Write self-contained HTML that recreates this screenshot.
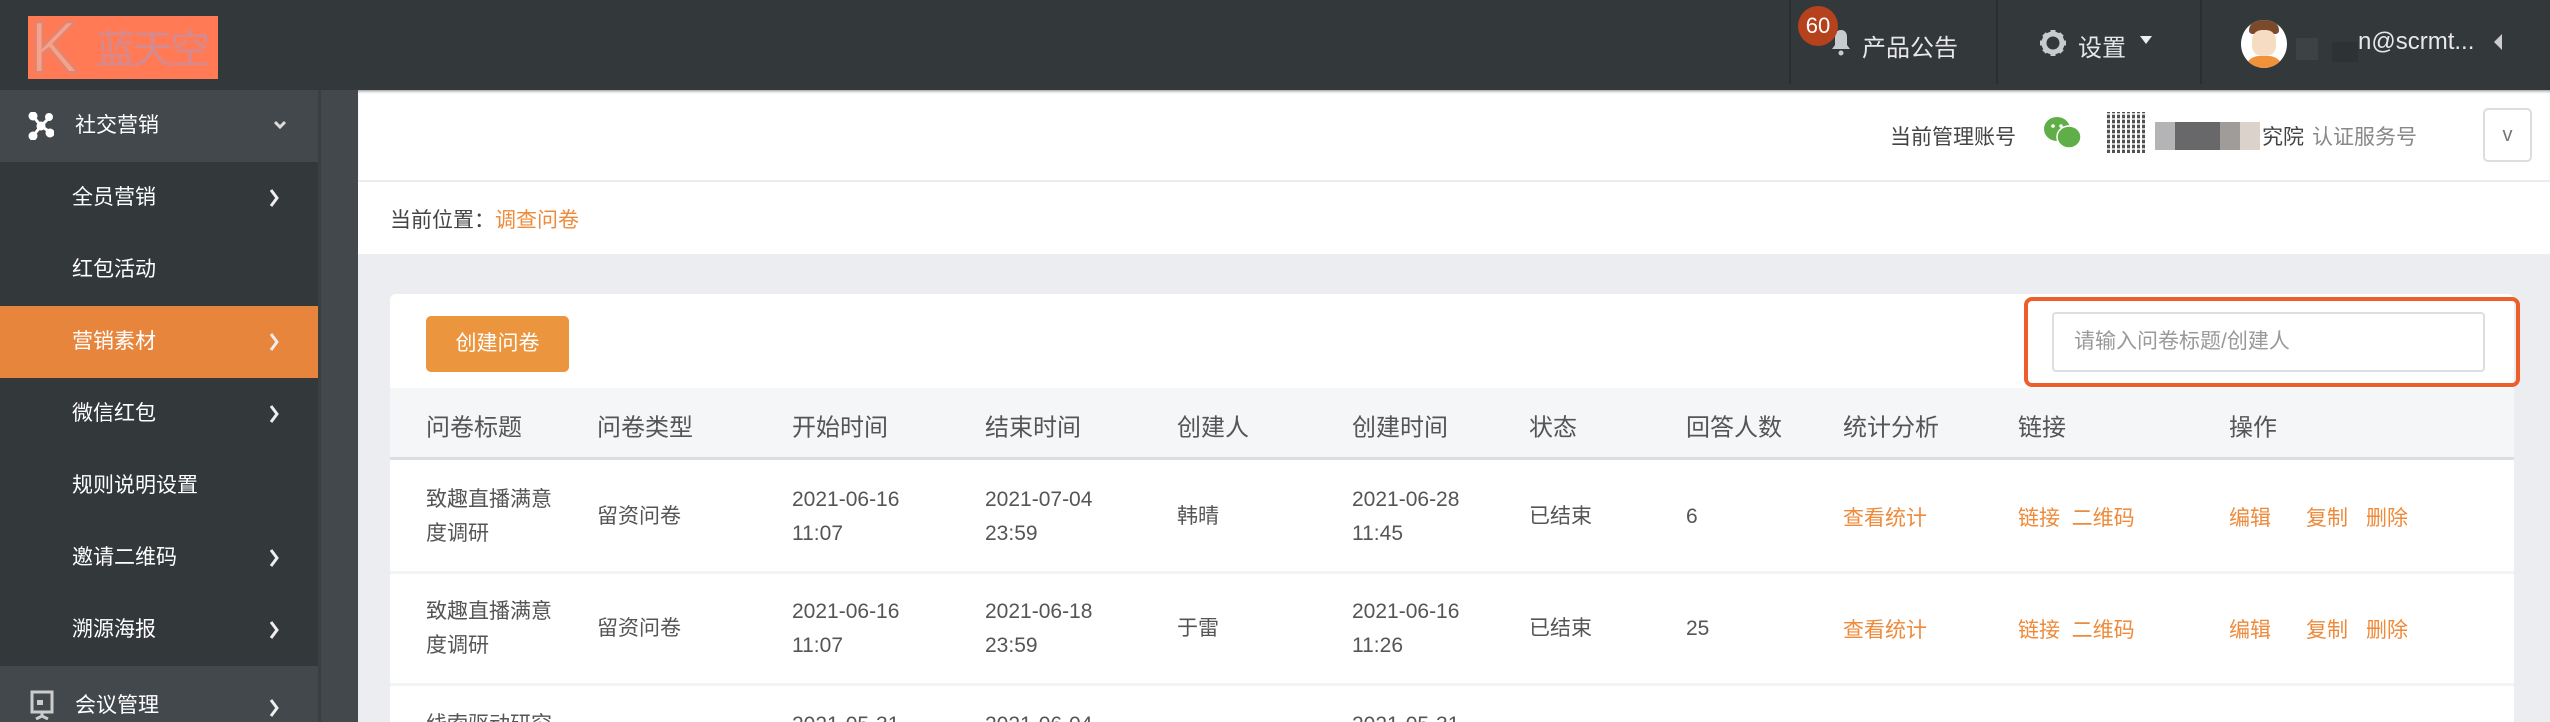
<!DOCTYPE html>
<html><head><meta charset="utf-8"><style>
*{margin:0;padding:0;box-sizing:border-box}
html{width:2550px;height:722px;overflow:hidden}
body{width:2550px;height:722px;overflow:hidden;background:#ebedf0;font-family:"Liberation Sans","Noto Sans CJK SC",sans-serif;position:relative;color:#555}
.a{position:absolute;white-space:nowrap}
#top{left:0;top:0;width:2550px;height:90px;background:#33383b}
#side{left:0;top:90px;width:318px;height:632px;background:#33383b}
#strip{left:318px;top:90px;width:40px;height:632px;background:#43484c;border-left:3px solid #3a3f42}
.it{position:absolute;left:0;width:318px;height:72px;color:#fff;font-size:21px;line-height:72px;padding-left:72px}
.it .ch{position:absolute;left:268px;top:24px;width:12px;height:24px}
.th{font-size:24px;color:#555;top:425px;transform:translateY(-50%)}
.td{font-size:21px;color:#555;line-height:34px}
.or{color:#ee8a3a}
</style></head><body>
<div id="top" class="a"></div>
<div class="a" style="left:28px;top:16px;width:190px;height:63px;background:#ff7a55;overflow:hidden">
<div class="a" style="left:2px;top:-6px;font-size:72px;line-height:76px;color:#f8a08a;-webkit-text-stroke:2px #d98878">K</div>
<div class="a" style="left:68px;top:12px;font-size:40px;line-height:44px;color:#d58a90;letter-spacing:-3px">蓝天空</div>
</div>

<!-- top right -->
<div class="a" style="left:1789px;top:0;width:2px;height:84px;background:#2a2e30"></div>
<div class="a" style="left:1996px;top:0;width:2px;height:84px;background:#2a2e30"></div>
<div class="a" style="left:2200px;top:0;width:2px;height:84px;background:#2a2e30"></div>
<svg class="a" style="left:1830px;top:28px" width="22" height="28" viewBox="0 0 22 28"><path d="M11 2c-4 0-6 3-6 7v8l-3 4h18l-3-4V9c0-4-2-7-6-7z" fill="#c8ccce"/><circle cx="11" cy="25" r="2.5" fill="#c8ccce"/></svg>
<div class="a" style="left:1798px;top:6px;width:40px;height:40px;border-radius:50%;background:#b5421c;color:#fff;font-size:22px;line-height:40px;text-align:center">60</div>
<div class="a" style="left:1862px;top:28px;font-size:24px;color:#e8e8e8">产品公告</div>
<svg class="a" style="left:2040px;top:30px" width="26" height="26" viewBox="0 0 26 26"><circle cx="13" cy="13" r="9" fill="none" stroke="#c8ccce" stroke-width="5"/><g stroke="#c8ccce" stroke-width="5"><path d="M13 0v6M13 20v6M0 13h6M20 13h6M4 4l4 4M18 18l4 4M22 4l-4 4M4 22l4-4"/></g></svg>
<div class="a" style="left:2078px;top:28px;font-size:24px;color:#e8e8e8">设置</div>
<div class="a" style="left:2140px;top:36px;width:0;height:0;border-left:6px solid transparent;border-right:6px solid transparent;border-top:8px solid #eee"></div>
<div class="a" style="left:2241px;top:20px;width:46px;height:48px;border-radius:50%;background:#fff;overflow:hidden">
<div class="a" style="left:8px;top:0;width:30px;height:14px;background:#7b4a2b;border-radius:12px 12px 4px 4px"></div>
<div class="a" style="left:11px;top:10px;width:24px;height:26px;background:#f6dcc3;border-radius:10px"></div>
<div class="a" style="left:4px;top:36px;width:38px;height:16px;background:#f0923a;border-radius:14px 14px 0 0"></div></div>
<div class="a" style="left:2296px;top:38px;width:22px;height:22px;background:#3d4245"></div>
<div class="a" style="left:2332px;top:42px;width:26px;height:20px;background:#2d3235"></div>
<div class="a" style="left:2358px;top:28px;font-size:24px;color:#e8e8e8">n@scrmt...</div>
<div class="a" style="left:2494px;top:34px;width:0;height:0;border-top:8px solid transparent;border-bottom:8px solid transparent;border-right:8px solid #ccc"></div>

<!-- sidebar -->
<div id="side" class="a"></div>
<div id="strip" class="a"></div>
<div class="it" style="top:90px;background:#43484c;padding-left:75px">社交营销<svg class="a" style="left:273px;top:30px" width="14" height="10" viewBox="0 0 14 10"><path d="M2 2l5 5 5-5" stroke="#ddd" stroke-width="3" fill="none"/></svg></div>
<svg class="a" style="left:28px;top:112px" width="26" height="28" viewBox="0 0 26 28"><g fill="#fff" stroke="#fff" stroke-width="3"><path d="M5 4L13 14L21 6M13 14L5 24M13 14L22 20" fill="none"/><circle cx="5" cy="4" r="3"/><circle cx="21" cy="5" r="2.5"/><circle cx="13" cy="14" r="3"/><circle cx="5" cy="24" r="3"/><circle cx="22" cy="21" r="3"/></g></svg>
<div class="it" style="top:162px">全员营销<svg class="ch" viewBox="0 0 12 24"><path d="M3 4l6 8-6 8" stroke="#eee" stroke-width="3" fill="none"/></svg></div>
<div class="it" style="top:234px">红包活动</div>
<div class="it" style="top:306px;background:#e8853d">营销素材<svg class="ch" viewBox="0 0 12 24"><path d="M3 4l6 8-6 8" stroke="#eee" stroke-width="3" fill="none"/></svg></div>
<div class="it" style="top:378px">微信红包<svg class="ch" viewBox="0 0 12 24"><path d="M3 4l6 8-6 8" stroke="#eee" stroke-width="3" fill="none"/></svg></div>
<div class="it" style="top:450px">规则说明设置</div>
<div class="it" style="top:522px">邀请二维码<svg class="ch" viewBox="0 0 12 24"><path d="M3 4l6 8-6 8" stroke="#eee" stroke-width="3" fill="none"/></svg></div>
<div class="it" style="top:594px">溯源海报<svg class="ch" viewBox="0 0 12 24"><path d="M3 4l6 8-6 8" stroke="#eee" stroke-width="3" fill="none"/></svg></div>
<div class="it" style="top:666px;height:56px;background:#43484c;padding-left:75px;line-height:80px">会议管理<svg class="ch" style="top:30px" viewBox="0 0 12 24"><path d="M3 4l6 8-6 8" stroke="#eee" stroke-width="3" fill="none"/></svg></div>
<svg class="a" style="left:30px;top:690px" width="24" height="30" viewBox="0 0 24 30"><rect x="2" y="2" width="20" height="20" fill="none" stroke="#ccc" stroke-width="3"/><rect x="7" y="10" width="6" height="5" fill="#ccc"/><path d="M12 22v5M6 29l6-3 6 3" stroke="#ccc" stroke-width="3" fill="none"/></svg>

<!-- sub header -->
<div class="a" style="left:358px;top:90px;width:2192px;height:90px;background:#fff;box-shadow:inset 0 3px 3px -2px #888"></div>
<div class="a" style="left:1890px;top:121px;font-size:21px;color:#444">当前管理账号</div>
<svg class="a" style="left:2043px;top:116px" width="40" height="34" viewBox="0 0 40 34"><ellipse cx="14" cy="13" rx="13" ry="12" fill="#5fae48"/><ellipse cx="26" cy="21" rx="12" ry="11" fill="#5fae48" stroke="#fff" stroke-width="1.5"/><circle cx="10" cy="10" r="1.8" fill="#fff"/><circle cx="18" cy="10" r="1.8" fill="#fff"/></svg>
<div class="a" style="left:2107px;top:112px;width:40px;height:41px;background:repeating-linear-gradient(90deg,#333 0 3px,#fff 3px 5px),#333;opacity:.85"></div>
<div class="a" style="left:2107px;top:112px;width:40px;height:41px;background:repeating-linear-gradient(0deg,transparent 0 3px,rgba(255,255,255,.7) 3px 5px)"></div>
<div class="a" style="left:2155px;top:122px;width:20px;height:28px;background:#b4b4b6"></div>
<div class="a" style="left:2175px;top:122px;width:45px;height:28px;background:#68686a"></div>
<div class="a" style="left:2220px;top:122px;width:20px;height:28px;background:#a09c9a"></div>
<div class="a" style="left:2240px;top:122px;width:20px;height:28px;background:#dcd2cc"></div>
<div class="a" style="left:2262px;top:121px;font-size:21px;color:#444">究院</div>
<div class="a" style="left:2312px;top:121px;font-size:21px;color:#888">认证服务号</div>
<div class="a" style="left:2483px;top:108px;width:49px;height:54px;border:2px solid #ddd;border-radius:5px;color:#777;font-size:20px;text-align:center;line-height:50px">v</div>

<!-- breadcrumb -->
<div class="a" style="left:358px;top:182px;width:2192px;height:72px;background:#fff"></div>
<div class="a" style="left:390px;top:204px;font-size:21px;color:#444">当前位置：<span class="or">调查问卷</span></div>

<!-- card -->
<div class="a" style="left:390px;top:294px;width:2124px;height:428px;background:#fff;border-radius:6px 6px 0 0"></div>
<div class="a" style="left:426px;top:316px;width:143px;height:56px;background:#ec953f;border-radius:5px;color:#fff;font-size:21px;line-height:56px;text-align:center">创建问卷</div>
<div class="a" style="left:2024px;top:297px;width:496px;height:90px;border:4px solid #ee5e2b;border-radius:8px"></div>
<div class="a" style="left:2052px;top:312px;width:433px;height:60px;border:2px solid #dcdee3;border-radius:4px;color:#999;font-size:21px;line-height:56px;padding-left:20px">请输入问卷标题/创建人</div>

<div class="a" style="left:390px;top:388px;width:2124px;height:72px;background:#f5f6f8;border-bottom:3px solid #dcdde3"></div>
<div class="a th" style="left:426px">问卷标题</div>
<div class="a th" style="left:597px">问卷类型</div>
<div class="a th" style="left:792px">开始时间</div>
<div class="a th" style="left:985px">结束时间</div>
<div class="a th" style="left:1177px">创建人</div>
<div class="a th" style="left:1352px">创建时间</div>
<div class="a th" style="left:1529px">状态</div>
<div class="a th" style="left:1686px">回答人数</div>
<div class="a th" style="left:1843px">统计分析</div>
<div class="a th" style="left:2018px">链接</div>
<div class="a th" style="left:2229px">操作</div>

<div class="a" style="left:390px;top:571px;width:2124px;height:3px;background:#f2f3f5"></div>
<div class="a" style="left:390px;top:683px;width:2124px;height:3px;background:#f2f3f5"></div>

<!-- row1 -->
<div class="a td" style="left:426px;top:483px">致趣直播满意<br>度调研</div>
<div class="a td" style="left:597px;top:500px">留资问卷</div>
<div class="a td" style="left:792px;top:483px">2021-06-16<br>11:07</div>
<div class="a td" style="left:985px;top:483px">2021-07-04<br>23:59</div>
<div class="a td" style="left:1177px;top:500px">韩晴</div>
<div class="a td" style="left:1352px;top:483px">2021-06-28<br>11:45</div>
<div class="a td" style="left:1529px;top:500px">已结束</div>
<div class="a td" style="left:1686px;top:500px">6</div>
<div class="a td or" style="left:1843px;top:502px">查看统计</div>
<div class="a td or" style="left:2018px;top:502px">链接&nbsp; 二维码</div>
<div class="a td or" style="left:2229px;top:502px">编辑</div>
<div class="a td or" style="left:2306px;top:502px">复制</div>
<div class="a td or" style="left:2366px;top:502px">删除</div>
<!-- row2 -->
<div class="a td" style="left:426px;top:595px">致趣直播满意<br>度调研</div>
<div class="a td" style="left:597px;top:612px">留资问卷</div>
<div class="a td" style="left:792px;top:595px">2021-06-16<br>11:07</div>
<div class="a td" style="left:985px;top:595px">2021-06-18<br>23:59</div>
<div class="a td" style="left:1177px;top:612px">于雷</div>
<div class="a td" style="left:1352px;top:595px">2021-06-16<br>11:26</div>
<div class="a td" style="left:1529px;top:612px">已结束</div>
<div class="a td" style="left:1686px;top:612px">25</div>
<div class="a td or" style="left:1843px;top:614px">查看统计</div>
<div class="a td or" style="left:2018px;top:614px">链接&nbsp; 二维码</div>
<div class="a td or" style="left:2229px;top:614px">编辑</div>
<div class="a td or" style="left:2306px;top:614px">复制</div>
<div class="a td or" style="left:2366px;top:614px">删除</div>
<!-- row3 partial -->
<div class="a td" style="left:426px;top:708px">线索驱动研究</div>
<div class="a td" style="left:792px;top:708px">2021-05-31</div>
<div class="a td" style="left:985px;top:708px">2021-06-04</div>
<div class="a td" style="left:1352px;top:708px">2021-05-31</div>
</body></html>
